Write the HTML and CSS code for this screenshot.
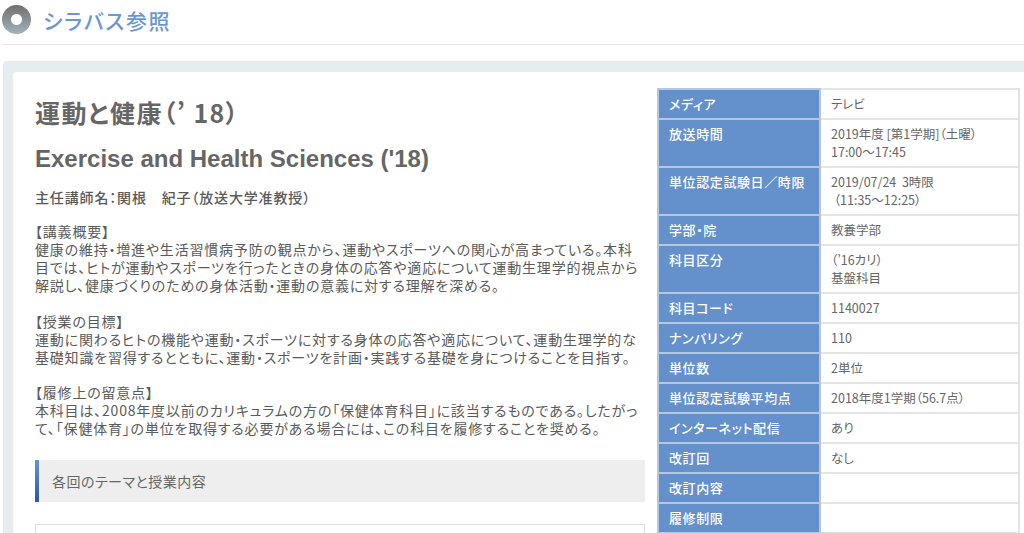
FILE: index.html
```html
<!DOCTYPE html>
<html lang="ja">
<head>
    <meta charset="utf-8">
    <title>シラバス参照</title>
    <link rel="stylesheet" href="styles.css">
</head>
<body>
    <header class="page-head">
        <span class="ring"></span>
        <h1>シラバス参照</h1>
    </header>
    <div class="panel">
        <div class="inner">
            <div class="left">
                <h2>運動と健康（’ 18）</h2>
                <h3>Exercise and Health Sciences ('18)</h3>
                <p class="teacher">主任講師名：関根　紀子（放送大学准教授）</p>
                <p class="block">【講義概要】<br>健康の維持・増進や生活習慣病予防の観点から、運動やスポーツへの関心が高まっている。本科<br>目では、ヒトが運動やスポーツを行ったときの身体の応答や適応について運動生理学的視点から<br>解説し、健康づくりのための身体活動・運動の意義に対する理解を深める。</p>
                <p class="block">【授業の目標】<br>運動に関わるヒトの機能や運動・スポーツに対する身体の応答や適応について、運動生理学的な<br>基礎知識を習得するとともに、運動・スポーツを計画・実践する基礎を身につけることを目指す。</p>
                <p class="block">【履修上の留意点】<br>本科目は、2008年度以前のカリキュラムの方の「保健体育科目」に該当するものである。したがっ<br>て、「保健体育」の単位を取得する必要がある場合には、この科目を履修することを奨める。</p>
                <div class="section-head">各回のテーマと授業内容</div>
                <div class="section-box"></div>
            </div>
            <table class="info">
                <tr><th>メディア</th><td>テレビ</td></tr>
                <tr><th>放送時間</th><td>2019年度 [第1学期]（土曜）<br>17:00～17:45</td></tr>
                <tr><th>単位認定試験日／時限</th><td>2019/07/24&nbsp; 3時限<br>&nbsp;（11:35～12:25）</td></tr>
                <tr><th>学部・院</th><td>教養学部</td></tr>
                <tr><th>科目区分</th><td>（’16カリ）<br>基盤科目</td></tr>
                <tr><th>科目コード</th><td>1140027</td></tr>
                <tr><th>ナンバリング</th><td>110</td></tr>
                <tr><th>単位数</th><td>2単位</td></tr>
                <tr><th>単位認定試験平均点</th><td>2018年度1学期（56.7点）</td></tr>
                <tr><th>インターネット配信</th><td>あり</td></tr>
                <tr><th>改訂回</th><td>なし</td></tr>
                <tr><th>改訂内容</th><td></td></tr>
                <tr><th>履修制限</th><td></td></tr>
            </table>
        </div>
    </div>
</body>
</html>
```

FILE: styles.css
```css
html, body {
    height: 533px;
    overflow: hidden;
}
body {
    margin: 0;
    background: #fff;
    color: #5a5a5a;
    font-family: "Noto Sans CJK JP", "Liberation Sans", sans-serif;
    font-feature-settings: "palt";
}

.page-head {
    display: flex;
    align-items: center;
    gap: 12px;
    height: 45px;
    margin-left: 2px;
    padding-bottom: 5px;
    box-sizing: border-box;
    border-bottom: 1px solid #e2e4e6;
}
.ring {
    width: 29px;
    height: 29px;
    border-radius: 50%;
    background: radial-gradient(circle, #fff 0 5px, transparent 6px), linear-gradient(#6f6f6f, #a3b3bd);
}
h1 {
    margin: 0;
    font-size: 21px;
    line-height: 30px;
    font-weight: 500;
    letter-spacing: 1.7px;
    color: #6a97d3;
}

.panel {
    margin: 16px 0 0 3px;
    padding: 11px 0 0 10px;
    background: #e6edf1;
    border-radius: 4px 0 0 0;
    height: 472px;
    box-sizing: border-box;
    overflow: hidden;
}
.inner {
    display: flex;
    align-items: flex-start;
    gap: 12px;
    height: 100%;
    padding: 16px 4px 0 22px;
    box-sizing: border-box;
    background: #fff;
    border-radius: 4px 0 0 0;
}
.left {
    width: 610px;
    flex: none;
}

h2 {
    margin: 7px 0 0;
    font-size: 25px;
    line-height: 34px;
    font-weight: 700;
    letter-spacing: 1.4px;
    color: #666;
    white-space: nowrap;
}
h3 {
    margin: 16px 0 0;
    font: bold 24px/28px "Liberation Sans", sans-serif;
    color: #666;
    white-space: nowrap;
}
.teacher {
    margin: 12px 0 0;
    font-size: 14px;
    line-height: 24px;
    font-weight: 500;
    letter-spacing: 0.85px;
    white-space: nowrap;
}
.block {
    margin: 13px 0 0;
    font-size: 14px;
    line-height: 18px;
    letter-spacing: 0.8px;
    white-space: nowrap;
}
.block + .block {
    margin-top: 18px;
}
.block + .block + .block {
    margin-top: 17px;
}

.section-head {
    margin-top: 23px;
    height: 42px;
    padding-left: 13px;
    border-left: 4px solid #3f6cad;
    border-image: linear-gradient(#6a97d3, #2a5698) 1;
    background: #eee;
    font-size: 14px;
    line-height: 42px;
    letter-spacing: 0.5px;
    color: #666;
}
.section-box {
    margin-top: 22px;
    height: 40px;
    border: 1px solid #ddd;
}

.info {
    width: 363px;
    flex: none;
    border-collapse: collapse;
    border: 2px solid #e2e2e2;
    font-size: 12.5px;
    line-height: 18px;
    table-layout: fixed;
}
.info th, .info td {
    padding: 5px 10px;
    border: 2px solid #e4e4e4;
    text-align: left;
    vertical-align: top;
}
.info th {
    width: 140px;
    background: #6490cc;
    color: #fff;
    font-size: 13px;
    font-weight: 500;
    letter-spacing: 0.6px;
    border-color: #b5c7dd;
    white-space: nowrap;
}
.info td {
    color: #666;
    white-space: nowrap;
}
```
